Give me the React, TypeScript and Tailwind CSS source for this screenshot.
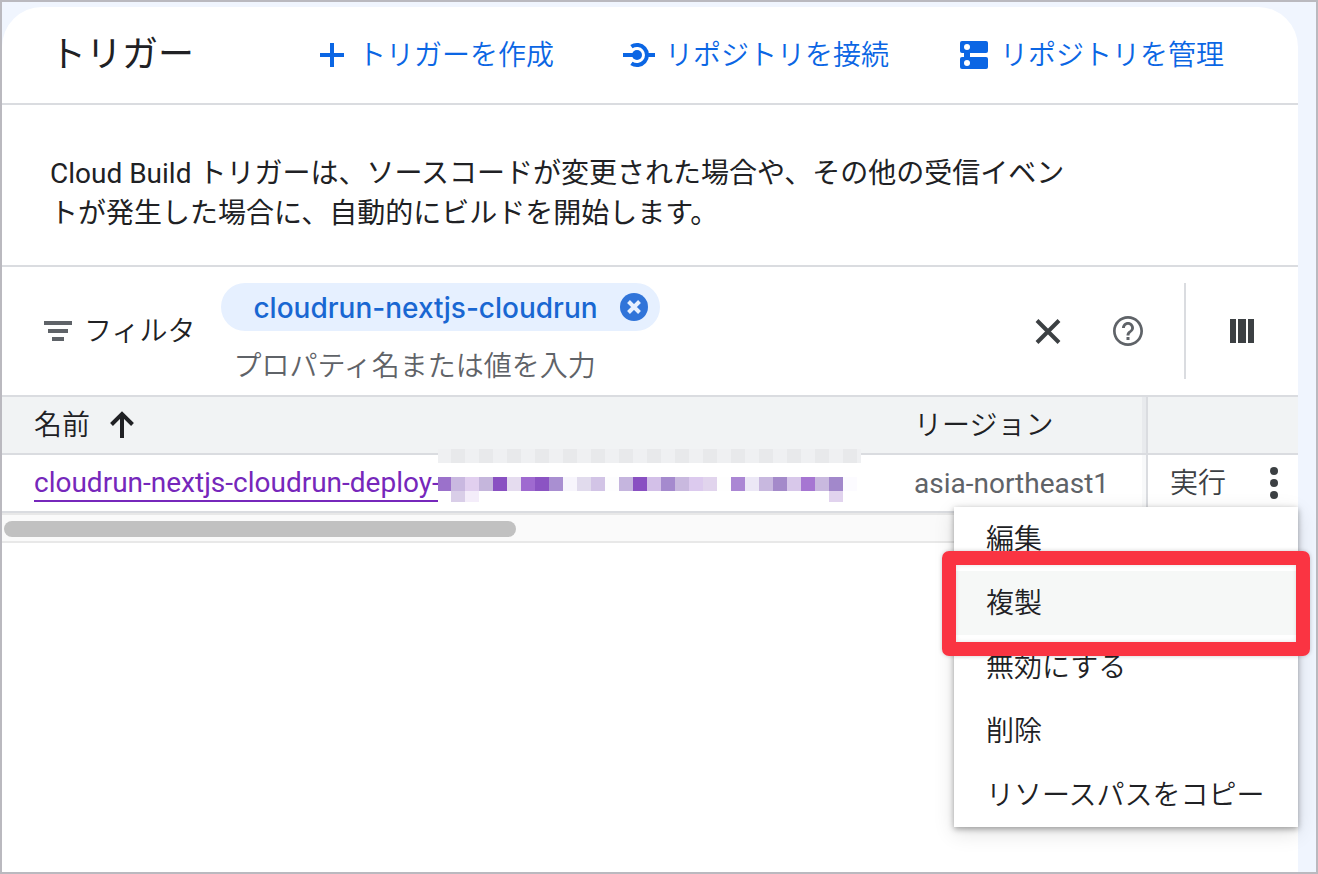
import React, { useState } from 'react';

const menuItems = ['編集', '複製', '無効にする', '削除', 'リソースパスをコピー'];

// Colours of the pixelated part of the trigger name, left to right
const mosaicRow = [
  '#9b71cb', '#c9b8e0', '#e1cfef', '#c5b6dc', '#8950c2', '#e5dcef', '#9f6ad0', '#8b54c3', '#a98fd1', '#f7f5fc',
  '#e1dbed', '#d2c4e6', '#fdfdfe', '#c5b5de', '#8950c2', '#d3c0e8', '#a58ace', '#c9b9df', '#dccaee', '#e1d4ed',
  '#fefefe', '#ab87d4', '#ece8f6', '#c8b8df', '#a48aca', '#d8c8ea', '#a676d2', '#c9b9df', '#a288cb', '#fcfbff',
];

const mosaicTail = [
  { col: 1, fill: '#d9cee8' },
  { col: 2, fill: '#f4edfa' },
  { col: 28, fill: '#e1d3ee' },
];

const Mosaic: React.FC = () => (
  <svg width="423" height="54" viewBox="0 0 423 54" shapeRendering="crispEdges" aria-hidden="true">
    <rect width="423" height="54" fill="#fff" />
    {Array.from({ length: 31 }, (_, i) => (
      <rect key={i} x={i * 14 - 1} y="0" width="14" height="14" fill={i % 2 ? '#e8e9eb' : '#eff0f2'} />
    ))}
    {mosaicRow.map((fill, i) => (
      <rect key={i} x={i * 14 - 1} y="28" width="14" height="14" fill={fill} />
    ))}
    {mosaicTail.map(({ col, fill }) => (
      <rect key={col} x={col * 14 - 1} y="42" width="14" height="11" fill={fill} />
    ))}
  </svg>
);

const AddIcon: React.FC = () => (
  <svg width="36" height="36" viewBox="0 0 36 36" fill="currentColor" aria-hidden="true">
    <path d="M16 6h4v10h10v4H20v10h-4V20H6v-4h10z" />
  </svg>
);

const ConnectIcon: React.FC = () => (
  <svg width="36" height="36" viewBox="0 0 36 36" fill="none" stroke="currentColor" strokeWidth="4" aria-hidden="true">
    <path d="M10.4 9.7A10 10 0 1 1 10.4 26.3" />
    <path d="M2 18h12M27 18h7" />
    <circle cx="16" cy="18" r="5" fill="currentColor" stroke="none" />
  </svg>
);

const ManageIcon: React.FC = () => (
  <svg width="36" height="36" viewBox="0 0 36 36" fill="currentColor" aria-hidden="true">
    <rect x="4" y="4" width="28" height="12" rx="2" />
    <rect x="4" y="20" width="28" height="12" rx="2" />
    <rect x="8" y="15" width="6" height="6" />
    <circle cx="11" cy="10" r="3" fill="#fff" />
    <circle cx="11" cy="26" r="3" fill="#fff" />
  </svg>
);

const actions = [
  { label: 'トリガーを作成', icon: <AddIcon /> },
  { label: 'リポジトリを接続', icon: <ConnectIcon /> },
  { label: 'リポジトリを管理', icon: <ManageIcon /> },
];

const Header: React.FC = () => (
  <header className="flex h-[98px] items-center border-b-2 border-[#dadce0] pl-12">
    <h1 className="mr-[120px] text-[36px] font-normal leading-12 whitespace-nowrap">トリガー</h1>
    <div className="flex items-center gap-[67px]">
      {actions.map(({ label, icon }) => (
        <button key={label} type="button" className="flex items-center gap-2 whitespace-nowrap text-[#0b66e4]">
          {icon}
          <span className="pt-0.5">{label}</span>
        </button>
      ))}
    </div>
  </header>
);

const FilterBar: React.FC = () => (
  <div className="flex items-center border-b-2 border-[#dadce0] py-4 pl-[38px] pr-[38px]">
    <label htmlFor="filter" className="flex items-center gap-2 whitespace-nowrap">
      <svg width="36" height="36" viewBox="0 0 36 36" fill="#5f6368" aria-hidden="true">
        <path d="M4 8h28v4H4zM8 16h20v4H8zM12 24h12v4H12z" />
      </svg>
      <span className="pt-0.5">フィルタ</span>
    </label>
    <div className="-mb-2 ml-[26px] flex min-w-0 flex-1 flex-col items-start gap-4">
      <span className="flex h-12 items-center gap-[22px] rounded-full bg-[#e6f0ff] pl-8 pr-3 font-['Inter',sans-serif] font-medium text-[#1967d2]">
        <span className="pt-0.5">cloudrun-nextjs-cloudrun</span>
        <button type="button" aria-label="削除">
          <svg width="28" height="28" viewBox="0 0 28 28" aria-hidden="true">
            <circle cx="14" cy="14" r="14" fill="#3074d9" />
            <path d="M8.5 8.5l11 11M19.5 8.5l-11 11" stroke="#e6f0ff" strokeWidth="4" />
          </svg>
        </button>
      </span>
      <input
        id="filter"
        type="text"
        placeholder="プロパティ名または値を入力"
        className="h-10 w-full pl-3 outline-none placeholder:text-[#5f6368] placeholder:opacity-100"
      />
    </div>
    <div className="flex items-center gap-11">
      <button type="button" aria-label="クリア">
        <svg width="36" height="36" viewBox="0 0 36 36" stroke="#3c4043" strokeWidth="4" aria-hidden="true">
          <path d="M7 7.5l22 22M29 7.5l-22 22" />
        </svg>
      </button>
      <button type="button" aria-label="ヘルプ">
        <svg width="36" height="36" viewBox="0 0 24 24" fill="#5f6368" aria-hidden="true">
          <path d="M11 18h2v-2h-2v2zm1-16C6.48 2 2 6.48 2 12s4.48 10 10 10 10-4.48 10-10S17.52 2 12 2zm0 18.2c-4.53 0-8.2-3.67-8.2-8.2S7.47 3.8 12 3.8s8.2 3.67 8.2 8.2-3.67 8.2-8.2 8.2zM12 6c-2.21 0-4 1.79-4 4h1.9c0-1.1.95-2.1 2.1-2.1s2.1 1 2.1 2.1c0 2-3.1 1.75-3.1 5h2c0-2.25 3-2.5 3-5 0-2.21-1.79-4-4-4z" />
        </svg>
      </button>
    </div>
    <div className="ml-[38px] flex h-24 items-center border-l-2 border-[#dadce0] pl-[38px]">
      <button type="button" aria-label="列の表示">
        <svg width="36" height="36" viewBox="0 0 36 36" fill="#3c4043" aria-hidden="true">
          <path d="M6 6h6v24H6zM14 6h8v24h-8zM24 6h6v24h-6z" />
        </svg>
      </button>
    </div>
  </div>
);

const RowMenu: React.FC = () => (
  <ul
    role="menu"
    className="absolute right-0 top-[52px] z-10 w-[344px] bg-white text-[#202124] shadow-[0_2px_6px_rgba(0,0,0,0.35),0_6px_20px_rgba(0,0,0,0.12)]"
  >
    {menuItems.map((item) => (
      <li key={item} role="none" className="relative">
        <button
          type="button"
          role="menuitem"
          className={`h-16 w-full whitespace-nowrap pt-0.5 pl-8 text-left ${item === '複製' ? 'bg-[#f6f8f7]' : ''}`}
        >
          {item}
        </button>
        {item === '複製' && (
          <div className="pointer-events-none absolute -inset-x-3 -top-5 -bottom-[21px] z-20 rounded-[7px] border-[14px] border-[#fa3442] shadow-[0_0_4px_rgba(0,0,0,0.2),inset_0_0_4px_rgba(0,0,0,0.12)]" />
        )}
      </li>
    ))}
  </ul>
);

const TriggerTable: React.FC = () => {
  const [menuOpen, setMenuOpen] = useState(true);

  return (
    <table className="w-full table-fixed border-separate border-spacing-0 text-left">
      <colgroup>
        <col />
        <col className="w-[260px]" />
        <col className="w-[156px]" />
      </colgroup>
      <thead>
        <tr className="h-[58px] bg-[#f1f3f4]">
          <th className="border-b-2 border-[#dadce0] p-0 pl-8 font-[350]">
            <button type="button" className="flex items-center gap-[14px]">
              <span className="pt-0.5">名前</span>
              <svg width="36" height="36" viewBox="0 0 36 36" fill="none" stroke="#202124" strokeWidth="4" aria-hidden="true">
                <path d="M18 31V7M7.500 17.500L18 7l10.500 10.500" />
              </svg>
            </button>
          </th>
          <th className="border-b-2 border-[#dadce0] p-0 pt-0.5 pl-8 font-[350]">リージョン</th>
          <th className="border-b-2 border-[#dadce0] p-0">
            <div className="h-14 border-l-4 border-[#e8eaed]">
              <div className="h-full border-l-2 border-[#dadce0]" />
            </div>
          </th>
        </tr>
      </thead>
      <tbody>
        <tr className="h-[58px]">
          <td className="border-b-2 border-[#dadce0] p-0 pl-8 font-normal">
            <div className="relative inline-block whitespace-nowrap">
              <a href="#trigger" className="block border-b-2 border-[#7627bb] leading-[34px] text-[#7627bb]">
                cloudrun-nextjs-cloudrun-deploy-
              </a>
              <div className="absolute -top-[17px] left-full -ml-0.5">
                <Mosaic />
              </div>
            </div>
          </td>
          <td className="border-b-2 border-[#dadce0] p-0 pt-0.5 pl-8 font-normal text-[#5f6368]">asia-northeast1</td>
          <td className="relative border-b-2 border-[#dadce0] p-0">
            <div className="h-14 border-l-4 border-[#f8f9fa]">
              <div className="flex h-full items-center justify-between border-l-2 border-[#dadce0] pl-[22px] pr-1.5 text-[#3c4043]">
                <button type="button" className="pt-0.5">実行</button>
                <button type="button" aria-label="その他の操作" onClick={() => setMenuOpen(!menuOpen)}>
                  <svg width="36" height="36" viewBox="0 0 36 36" fill="#3c4043" aria-hidden="true">
                    <circle cx="18" cy="6" r="4" />
                    <circle cx="18" cy="18" r="4" />
                    <circle cx="18" cy="30" r="4" />
                  </svg>
                </button>
              </div>
            </div>
            {menuOpen && <RowMenu />}
          </td>
        </tr>
      </tbody>
    </table>
  );
};

const App: React.FC = () => (
  <div className="flex min-h-screen flex-col border-2 border-[#bab9bf] bg-[#f0f5fe] pt-[5px] pr-[18px] font-['Roboto','Noto_Sans_CJK_JP',sans-serif] text-[28px] font-[350] leading-10 text-[#202124]">
    <main lang="ja" className="flex-1 rounded-t-[40px] bg-white">
      <Header />
      <section className="border-b-2 border-[#dadce0] px-12 pt-[49px] pb-[31px]">
        <p className="max-w-[1032px] font-normal">
          Cloud Build トリガーは、ソースコードが変更された場合や、その他の受信イベントが発生した場合に、自動的にビルドを開始します。
        </p>
      </section>
      <FilterBar />
      <TriggerTable />
      {/* Horizontal scrollbar of the table */}
      <div className="border-y-2 border-[#e8e8e8] bg-[#fafafa] px-0.5 pt-1.5 pb-1">
        <div className="h-4 w-[39.6%] rounded-full bg-[#c1c1c1]" />
      </div>
    </main>
  </div>
);

export default App;
